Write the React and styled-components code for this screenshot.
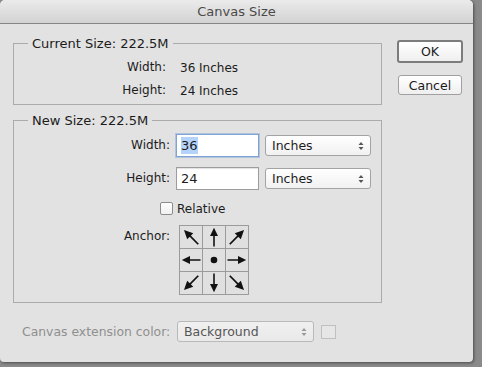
import React from "react";
import styled, { createGlobalStyle } from "styled-components";

const Global = createGlobalStyle`
  html, body { margin: 0; padding: 0; }
  body {
    background: #8a8a8a;
    font-family: "DejaVu Sans", "Liberation Sans", sans-serif;
    font-size: 12px;
    color: #1c1c1c;
    width: 482px;
    height: 367px;
    overflow: hidden;
  }
`;

const Window = styled.div`
  width: 473px;
  height: 362px;
  background: #e2e2e2;
  border-radius: 5px 5px 4px 4px;
  overflow: hidden;
  display: flex;
  flex-direction: column;
  box-shadow: 1px 1px 3px rgba(0, 0, 0, 0.45);
`;

const TitleBar = styled.div`
  height: 23px;
  flex: none;
  display: flex;
  align-items: center;
  justify-content: center;
  background: linear-gradient(#ebebeb, #d2d2d2);
  border-bottom: 1px solid #868686;
  color: #4a4a4a;
  font-size: 13px;
`;

const Content = styled.div`
  display: flex;
  padding: 12px 0 0 13px;
`;

const LeftCol = styled.div`
  width: 369px;
  display: flex;
  flex-direction: column;
`;

const RightCol = styled.div`
  margin-left: 15px;
  padding-top: 4px;
  display: flex;
  flex-direction: column;
  align-items: center;
  width: 66px;
`;

const Group = styled.fieldset`
  margin: ${(p) => p.$mt || 0}px 0 0 0;
  padding: ${(p) => p.$pt}px 0 ${(p) => p.$pb}px 0;
  border: 1px solid #ababab;
  min-width: 0;
  display: flex;
  flex-direction: column;
`;

const Legend = styled.legend`
  margin-left: 14px;
  padding: 0 4px;
  line-height: 15px;
  font-size: 13px;
`;

const InfoRow = styled.div`
  display: flex;
  align-items: center;
  height: 23px;
`;

const RowLabel = styled.div`
  width: ${(p) => p.$w}px;
  flex: none;
  text-align: right;
  white-space: nowrap;
  margin-right: ${(p) => p.$gap}px;
  line-height: ${(p) => p.$lh || 15}px;
  color: ${(p) => (p.$disabled ? "#8f8f8f" : "inherit")};
  font-size: ${(p) => (p.$disabled ? "12.4px" : "inherit")};
`;

const FieldRow = styled.div`
  display: flex;
  align-items: ${(p) => (p.$top ? "flex-start" : "center")};
  margin-top: ${(p) => p.$mt || 0}px;
  height: ${(p) => (p.$h ? p.$h + "px" : "auto")};
`;

const TextField = styled.div`
  width: 83px;
  height: 23px;
  box-sizing: border-box;
  background: #fff;
  border: 1px solid ${(p) => (p.$focus ? "#7fa4d4" : "#9d9d9d")};
  box-shadow: ${(p) =>
    p.$focus ? "0 0 0 1px rgba(120,160,215,0.45)" : "inset 0 1px 1px rgba(0,0,0,0.12)"};
  display: flex;
  align-items: center;
  padding-left: 4px;
  font-size: 13px;
`;

const Selected = styled.span`
  background: #b4d3fb;
  padding: 1px 0;
`;

const Select = styled.div`
  width: ${(p) => p.$w}px;
  height: 21px;
  box-sizing: border-box;
  margin-left: ${(p) => p.$ml || 0}px;
  border: 1px solid ${(p) => (p.$disabled ? "#b9b9b9" : "#a3a3a3")};
  border-radius: 3px;
  background: ${(p) =>
    p.$disabled ? "linear-gradient(#f0f0f0, #e9e9e9)" : "linear-gradient(#ffffff, #f1f1f1)"};
  display: flex;
  align-items: center;
  justify-content: space-between;
  padding: 0 6px 0 6px;
  color: ${(p) => (p.$disabled ? "#555" : "inherit")};
  font-size: 12.5px;
`;

const Check = styled.div`
  width: 13px;
  height: 13px;
  box-sizing: border-box;
  margin-left: 146px;
  margin-right: 4px;
  border: 1px solid #8c8c8c;
  border-radius: 2px;
  background: linear-gradient(#ffffff, #f0f0f0);
`;

const AnchorGrid = styled.div`
  display: grid;
  grid-template-columns: repeat(3, 22px);
  grid-auto-rows: 22px;
  gap: 1px;
  padding: 1px;
  background: #9b9b9b;
`;

const Cell = styled.div`
  background: #e0e0e0;
  display: flex;
  align-items: center;
  justify-content: center;
`;

const BottomRow = styled.div`
  display: flex;
  align-items: center;
  margin-top: 18px;
  padding-left: 9px;
  height: 21px;
`;

const Swatch = styled.div`
  width: 15px;
  height: 14px;
  box-sizing: border-box;
  margin-left: 7px;
  border: 1px solid #c0c0c0;
  background: #e6e6e6;
`;

const Button = styled.div`
  width: ${(p) => (p.$default ? 66 : 64)}px;
  height: ${(p) => (p.$default ? 23 : 20)}px;
  box-sizing: border-box;
  margin-top: ${(p) => p.$mt || 0}px;
  border: ${(p) => (p.$default ? "2px solid #7c7c7c" : "1px solid #a0a0a0")};
  border-radius: 3px;
  background: linear-gradient(#ffffff, #efefef);
  display: flex;
  align-items: center;
  justify-content: center;
  font-size: 12.5px;
`;

const Arrows = ({ color = "#555" }) => (
  <svg width="6" height="10" viewBox="0 0 6 10">
    <path d="M3 1 L5.5 4 L0.5 4 Z" fill={color} />
    <path d="M3 9 L5.5 6 L0.5 6 Z" fill={color} />
  </svg>
);

const Arrow = ({ angle }) => {
  const diag = angle % 90 !== 0;
  const s = diag ? 1.08 : 1;
  return (
    <svg width="22" height="22" viewBox="0 0 22 22">
      <g transform={`translate(11 11) rotate(${angle}) scale(${s}) translate(-11 -11)`}>
        <line x1="11" y1="9" x2="11" y2="20.5" stroke="#111" strokeWidth="1.6" />
        <path d="M11 1.8 L15 10 L7 10 Z" fill="#111" />
      </g>
    </svg>
  );
};

const Dot = () => (
  <svg width="22" height="22" viewBox="0 0 22 22">
    <circle cx="11" cy="11" r="3.3" fill="#111" />
  </svg>
);

const anchors = [-45, 0, 45, -90, null, 90, -135, 180, 135];

export default function App() {
  return (
    <>
      <Global />
      <Window>
        <TitleBar>Canvas Size</TitleBar>
        <Content>
          <LeftCol>
            <Group $pt={5} $pb={2}>
              <Legend>Current Size: 222.5M</Legend>
              <InfoRow>
                <RowLabel $w={152} $gap={14}>Width:</RowLabel>
                <span>36 Inches</span>
              </InfoRow>
              <InfoRow>
                <RowLabel $w={152} $gap={14}>Height:</RowLabel>
                <span>24 Inches</span>
              </InfoRow>
            </Group>
            <Group $mt={8} $pt={6} $pb={7}>
              <Legend>New Size: 222.5M</Legend>
              <FieldRow $h={23}>
                <RowLabel $w={156} $gap={6}>Width:</RowLabel>
                <TextField $focus>
                  <Selected>36</Selected>
                </TextField>
                <Select $w={106} $ml={6}>
                  <span>Inches</span>
                  <Arrows />
                </Select>
              </FieldRow>
              <FieldRow $h={23} $mt={10}>
                <RowLabel $w={156} $gap={6}>Height:</RowLabel>
                <TextField>24</TextField>
                <Select $w={106} $ml={6}>
                  <span>Inches</span>
                  <Arrows />
                </Select>
              </FieldRow>
              <FieldRow $h={17} $mt={10}>
                <Check />
                <span>Relative</span>
              </FieldRow>
              <FieldRow $top $mt={8}>
                <RowLabel $w={156} $gap={9} $lh={23}>Anchor:</RowLabel>
                <AnchorGrid>
                  {anchors.map((a, i) => (
                    <Cell key={i}>{a === null ? <Dot /> : <Arrow angle={a} />}</Cell>
                  ))}
                </AnchorGrid>
              </FieldRow>
            </Group>
            <BottomRow>
              <RowLabel $w={148} $gap={7} $disabled>Canvas extension color:</RowLabel>
              <Select $w={137} $disabled>
                <span>Background</span>
                <Arrows color="#999" />
              </Select>
              <Swatch />
            </BottomRow>
          </LeftCol>
          <RightCol>
            <Button $default>OK</Button>
            <Button $mt={12}>Cancel</Button>
          </RightCol>
        </Content>
      </Window>
    </>
  );
}
